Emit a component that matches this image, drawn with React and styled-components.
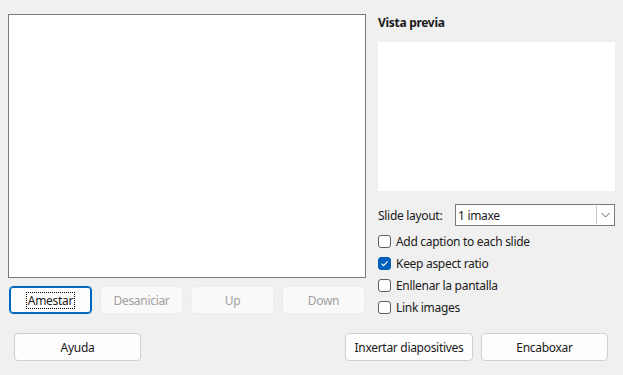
import styled, { createGlobalStyle } from "styled-components";

const Global = createGlobalStyle`
  html, body { margin: 0; padding: 0; background: #f0f0f0; }
  body {
    font-family: "Noto Sans", "Open Sans", sans-serif;
    font-size: 12px;
    letter-spacing: -0.3px;
    color: #1a1a1a;
    width: 623px;
    height: 375px;
    overflow: hidden;
  }
`;

const Dialog = styled.div`
  display: flex;
  flex-direction: column;
  padding: 14px 8px 0 8px;
`;

const Main = styled.div`
  display: flex;
  align-items: flex-start;
  gap: 12px;
  height: 300px;
`;

const LeftCol = styled.div`
  display: flex;
  flex-direction: column;
  gap: 8px;
  width: 358px;
`;

const ListBox = styled.div`
  height: 262px;
  background: #fff;
  border: 1px solid #7a7a7a;
`;

const ButtonRow = styled.div`
  display: flex;
  gap: 8px;
  padding-left: 1px;
`;

const Button = styled.button`
  font: inherit;
  letter-spacing: inherit;
  width: ${(p) => p.$w || 83}px;
  height: 28px;
  padding: 0;
  border-radius: 4px;
  background: ${(p) => (p.disabled ? "#f9f9f9" : "#fdfdfd")};
  border: 1px solid ${(p) => (p.$focus ? "#0067c0" : p.disabled ? "#ececec" : "#d0d0d0")};
  box-shadow: ${(p) => (p.$focus ? "inset 0 0 0 1px #0067c0" : "none")};
  color: ${(p) => (p.disabled ? "#a0a0a0" : "#1a1a1a")};
  display: flex;
  align-items: center;
  justify-content: center;
`;

const FocusText = styled.span`
  outline: 1px dotted #000;
  padding: 0 1px;
  line-height: 15px;
`;

const RightCol = styled.div`
  display: flex;
  flex-direction: column;
  width: 237px;
`;

const Heading = styled.div`
  font-weight: 700;
  height: 28px;
  line-height: 16px;
  padding-top: 1px;
  box-sizing: border-box;
`;

const Preview = styled.div`
  height: 149px;
  background: #fff;
`;

const LayoutRow = styled.div`
  display: flex;
  align-items: center;
  margin-top: 13px;
  margin-bottom: 8px;
`;

const Label = styled.span`
  width: 77px;
`;

const Select = styled.div`
  flex: 1;
  height: 20px;
  background: #fff;
  border: 1px solid #7a7a7a;
  display: flex;
  align-items: center;
`;

const SelectValue = styled.span`
  flex: 1;
  padding-left: 2px;
`;

const Arrow = styled.div`
  width: 16px;
  height: 18px;
  margin-right: 1px;
  border-left: 1px solid #c8c8c8;
  display: flex;
  align-items: center;
  justify-content: center;
`;

const CheckList = styled.div`
  display: flex;
  flex-direction: column;
  gap: 7px;
`;

const CheckRow = styled.label`
  display: flex;
  align-items: center;
  gap: 5px;
  height: 15px;
`;

const Box = styled.span`
  width: 11px;
  height: 11px;
  border-radius: 3px;
  border: 1px solid ${(p) => (p.$on ? "#005fb8" : "#5e5e5e")};
  background: ${(p) => (p.$on ? "#005fb8" : "#fff")};
  display: flex;
  align-items: center;
  justify-content: center;
`;

const Footer = styled.div`
  display: flex;
  justify-content: space-between;
  margin-top: 19px;
  padding: 0 7px 0 6px;
`;

const FooterRight = styled.div`
  display: flex;
  gap: 8px;
`;

const Check = ({ on, children }) => (
  <CheckRow>
    <Box $on={on}>
      {on && (
        <svg width="9" height="9" viewBox="0 0 9 9">
          <path d="M1.5 4.6 L3.6 6.6 L7.6 2.4" fill="none" stroke="#fff" strokeWidth="1.1" />
        </svg>
      )}
    </Box>
    {children}
  </CheckRow>
);

export default function App() {
  return (
    <>
      <Global />
      <Dialog>
        <Main>
          <LeftCol>
            <ListBox />
            <ButtonRow>
              <Button $focus>
                <FocusText>Amestar</FocusText>
              </Button>
              <Button disabled>Desaniciar</Button>
              <Button disabled>Up</Button>
              <Button disabled>Down</Button>
            </ButtonRow>
          </LeftCol>
          <RightCol>
            <Heading>Vista previa</Heading>
            <Preview />
            <LayoutRow>
              <Label>Slide layout:</Label>
              <Select>
                <SelectValue>1 imaxe</SelectValue>
                <Arrow>
                  <svg width="9" height="6" viewBox="0 0 9 6">
                    <path d="M0.5 1 L4.5 5 L8.5 1" fill="none" stroke="#606060" strokeWidth="1" />
                  </svg>
                </Arrow>
              </Select>
            </LayoutRow>
            <CheckList>
              <Check>Add caption to each slide</Check>
              <Check on>Keep aspect ratio</Check>
              <Check>Enllenar la pantalla</Check>
              <Check>Link images</Check>
            </CheckList>
          </RightCol>
        </Main>
        <Footer>
          <Button $w={127}>Ayuda</Button>
          <FooterRight>
            <Button $w={128}>Inxertar diapositives</Button>
            <Button $w={127}>Encaboxar</Button>
          </FooterRight>
        </Footer>
      </Dialog>
    </>
  );
}
